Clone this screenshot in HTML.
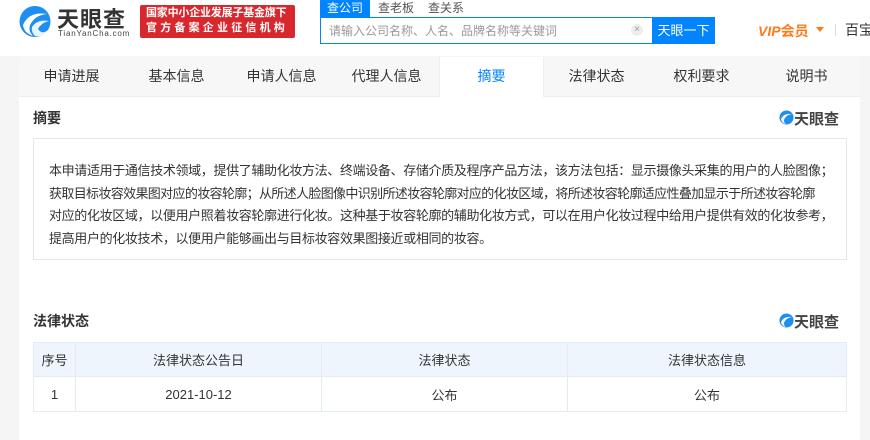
<!DOCTYPE html>
<html><head><meta charset="utf-8"><style>
*{margin:0;padding:0;box-sizing:border-box}
body{width:870px;height:440px;overflow:hidden;background:#f5f5f5;font-family:"Liberation Sans","Noto Sans CJK SC",sans-serif;color:#333;position:relative}
.hdr{position:absolute;left:0;top:0;width:870px;height:56px;background:#fff}
.abs{position:absolute;white-space:nowrap}
.tabs{position:absolute;left:19px;top:57px;width:841px;height:40px;background:#f7f7f7;border-bottom:1px solid #eee}
.tabs div{position:absolute;top:0;width:105px;height:40px;line-height:38px;text-align:center;font-size:14px;color:#333}
.tabs .on{background:#fff;color:#0084ff;border-left:1px solid #eee;border-right:1px solid #eee}
.main{position:absolute;left:19px;top:97px;width:841px;height:343px;background:#fff}
h3{position:absolute;font-size:14px;font-weight:bold;color:#333}
.box{position:absolute;left:33px;top:138px;width:814px;height:122px;border:1px solid #e0e8f0;padding:21px 0 0 15px;font-size:13px;letter-spacing:-.35px;line-height:22.5px;color:#333;white-space:nowrap;overflow:hidden}
table{position:absolute;left:33px;top:342px;width:814px;border-collapse:collapse;font-size:13px}
td,th{border:1px solid #e3ebf3;text-align:center;font-weight:normal;color:#333}
th{background:#eef5fc;height:34px}
td{height:35px}
.mini{position:absolute;font-size:15px;font-weight:bold;color:#444}
</style></head><body>
<div class="hdr">
<svg class="abs" style="left:19px;top:5px" width="32" height="33" viewBox="0 0 32 33"><circle cx="16" cy="16.5" r="15.5" fill="#1e8ff0"/><path d="M4 20 Q10 6 28 9 Q16 10 11 20 Q9 26 14 31 Q5 28 4 20Z" fill="#fff"/><path d="M13 22 Q18 14 30 16 Q22 18 19 24 Q23 30 29 25 Q24 33 16 31 Q12 27 13 22Z" fill="#fff" opacity=".9"/></svg>
<div class="abs" style="left:57px;top:2px;font-size:22px;font-weight:bold;color:#333;letter-spacing:1px">天眼查</div>
<div class="abs" style="left:58px;top:29px;font-size:8px;color:#444;letter-spacing:.8px">TianYanCha.com</div>
<div class="abs" style="left:140px;top:5px;width:155px;height:33px;background:#d9282d;border-radius:2px;color:#fff;font-size:11px;line-height:15px;padding:1px 0 0 6px;font-weight:bold"><span style="letter-spacing:-.2px">国家中小企业发展子基金旗下</span><br><span style="letter-spacing:3.2px">官方备案企业征信机构</span></div>
<div class="abs" style="left:320px;top:0;width:50px;height:17px;background:#0084ff;color:#fff;font-size:12px;line-height:17px;text-align:center">查公司</div>
<div class="abs" style="left:378px;top:0;font-size:12px;line-height:17px;color:#555">查老板</div>
<div class="abs" style="left:428px;top:0;font-size:12px;line-height:17px;color:#555">查关系</div>
<div class="abs" style="left:320px;top:17px;width:395px;height:27px;border:1px solid #0084ff"></div>
<div class="abs" style="left:329px;top:22px;font-size:12px;color:#999">请输入公司名称、人名、品牌名称等关键词</div>
<div class="abs" style="left:631px;top:24px;width:12px;height:12px;border-radius:6px;background:#eee;color:#999;font-size:10px;line-height:12px;text-align:center">×</div>
<div class="abs" style="left:652px;top:17px;width:63px;height:27px;background:#0084ff;color:#fff;font-size:13px;line-height:27px;text-align:center">天眼一下</div>
<div class="abs" style="left:758px;top:21px;font-size:14px;font-weight:bold;font-style:italic;color:#ff7a1a">VIP<span style="font-style:normal">会员</span></div>
<div class="abs" style="left:816px;top:27px;width:0;height:0;border-left:4px solid transparent;border-right:4px solid transparent;border-top:5px solid #ff7a1a"></div>
<div class="abs" style="left:835px;top:24px;width:1px;height:12px;background:#ddd"></div>
<div class="abs" style="left:845px;top:20px;font-size:14px;color:#333">百宝</div>
</div>
<div class="tabs">
<div style="left:0">申请进展</div><div style="left:105px">基本信息</div><div style="left:210px">申请人信息</div><div style="left:315px">代理人信息</div><div class="on" style="left:420px">摘要</div><div style="left:525px">法律状态</div><div style="left:630px">权利要求</div><div style="left:735px">说明书</div>
</div>
<div class="main"></div>
<h3 style="left:33px;top:108px">摘要</h3>
<svg class="abs" style="left:779px;top:110px" width="15" height="15" viewBox="0 0 32 33"><circle cx="16" cy="16.5" r="15.5" fill="#1e8ff0"/><path d="M4 20 Q10 6 28 9 Q16 10 11 20 Q9 26 14 31 Q5 28 4 20Z" fill="#fff"/></svg>
<div class="mini" style="left:794px;top:108px">天眼查</div>
<div class="box">本申请适用于通信技术领域，提供了辅助化妆方法、终端设备、存储介质及程序产品方法，该方法包括：显示摄像头采集的用户的人脸图像；<br><span style="letter-spacing:-.65px">获取目标妆容效果图对应的妆容轮廓；从所述人脸图像中识别所述妆容轮廓对应的化妆区域，将所述妆容轮廓适应性叠加显示于所述妆容轮廓</span><br>对应的化妆区域，以便用户照着妆容轮廓进行化妆。这种基于妆容轮廓的辅助化妆方式，可以在用户化妆过程中给用户提供有效的化妆参考，<br>提高用户的化妆技术，以便用户能够画出与目标妆容效果图接近或相同的妆容。</div>
<h3 style="left:33px;top:311px">法律状态</h3>
<svg class="abs" style="left:779px;top:313px" width="15" height="15" viewBox="0 0 32 33"><circle cx="16" cy="16.5" r="15.5" fill="#1e8ff0"/><path d="M4 20 Q10 6 28 9 Q16 10 11 20 Q9 26 14 31 Q5 28 4 20Z" fill="#fff"/></svg>
<div class="mini" style="left:794px;top:311px">天眼查</div>
<table><tr><th style="width:42px">序号</th><th style="width:246px">法律状态公告日</th><th style="width:246px">法律状态</th><th>法律状态信息</th></tr>
<tr><td>1</td><td>2021-10-12</td><td>公布</td><td>公布</td></tr></table>
</body></html>
